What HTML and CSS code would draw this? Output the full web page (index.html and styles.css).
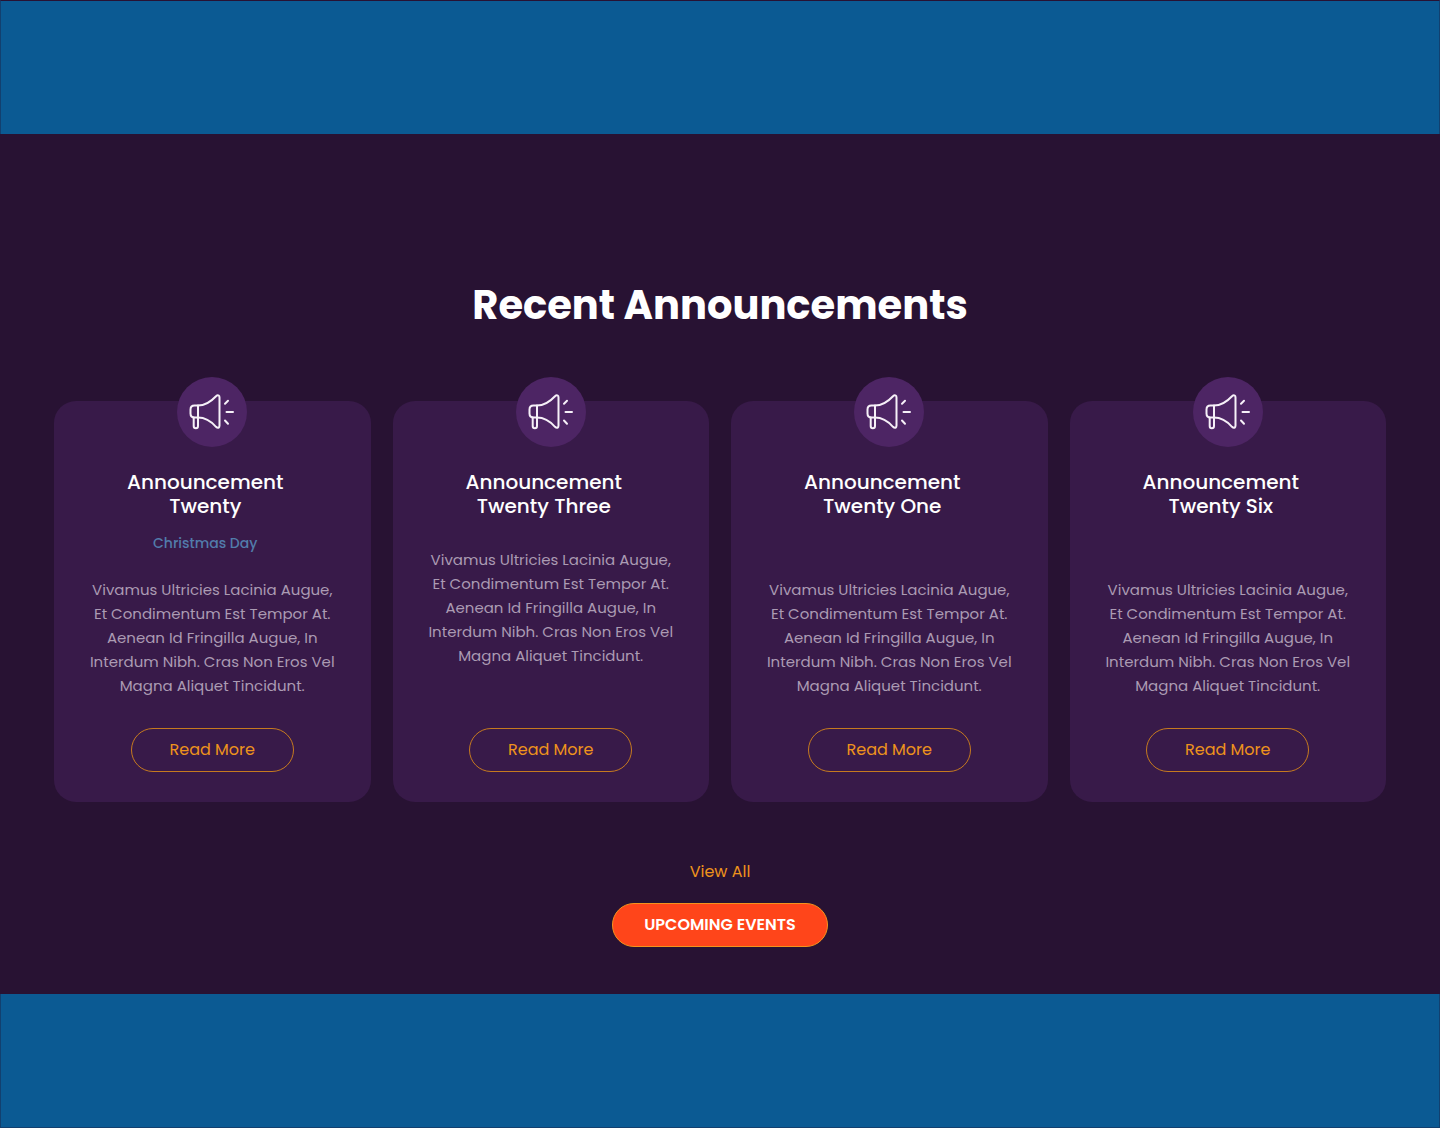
FILE: index.html
```html
<!DOCTYPE html>
<html lang="en">
<head>
<meta charset="utf-8">
<meta name="viewport" content="width=device-width, initial-scale=1">
<title>Recent Announcements</title>
<link rel="stylesheet" href="styles.css">
</head>
<body>
<svg class="sprite" aria-hidden="true">
  <symbol id="megaphone" viewBox="0 0 46 36">
    <path d="M9 11.500H5.500Q1.500 11.500 1.500 15.500V19.500Q1.500 23.500 5.500 23.500H9Z"/>
    <path d="M9 11.500C17 11.500 23 6.500 27 2.200Q28.500 .8 29.700 1.500Q30.500 2 30.500 3.500V31.500Q30.500 33 29.700 33.600Q28.500 34.300 27 32.800C23 28.300 17 23.500 9 23.500"/>
    <path d="M4.700 23.500V32Q4.700 34.300 6.900 34.300Q9 34.300 9 32V23.500"/>
    <path d="M36 9.700L39 6.700M37.500 18H44M36 26.500L39 29.700"/>
  </symbol>
</svg>
<div class="band band-top"></div>
<main class="announcements">
  <h1 class="title">Recent Announcements</h1>
  <div class="cards">
    <article class="card">
      <span class="badge"><svg class="icon" aria-hidden="true"><use href="#megaphone"/></svg></span>
      <div class="head"><h2 class="name">Announcement<br>Twenty</h2><p class="occasion">Christmas Day</p></div>
      <p class="text">Vivamus Ultricies Lacinia Augue,<br>Et Condimentum Est Tempor At.<br>Aenean Id Fringilla Augue, In<br>Interdum Nibh. Cras Non Eros Vel<br>Magna Aliquet Tincidunt.</p>
      <a class="more" href="#">Read More</a>
    </article>
    <article class="card">
      <span class="badge"><svg class="icon" aria-hidden="true"><use href="#megaphone"/></svg></span>
      <div class="head"><h2 class="name">Announcement<br>Twenty Three</h2></div>
      <p class="text">Vivamus Ultricies Lacinia Augue,<br>Et Condimentum Est Tempor At.<br>Aenean Id Fringilla Augue, In<br>Interdum Nibh. Cras Non Eros Vel<br>Magna Aliquet Tincidunt.</p>
      <a class="more" href="#">Read More</a>
    </article>
    <article class="card">
      <span class="badge"><svg class="icon" aria-hidden="true"><use href="#megaphone"/></svg></span>
      <div class="head"><h2 class="name">Announcement<br>Twenty One</h2><p class="occasion"></p></div>
      <p class="text">Vivamus Ultricies Lacinia Augue,<br>Et Condimentum Est Tempor At.<br>Aenean Id Fringilla Augue, In<br>Interdum Nibh. Cras Non Eros Vel<br>Magna Aliquet Tincidunt.</p>
      <a class="more" href="#">Read More</a>
    </article>
    <article class="card">
      <span class="badge"><svg class="icon" aria-hidden="true"><use href="#megaphone"/></svg></span>
      <div class="head"><h2 class="name">Announcement<br>Twenty Six</h2><p class="occasion"></p></div>
      <p class="text">Vivamus Ultricies Lacinia Augue,<br>Et Condimentum Est Tempor At.<br>Aenean Id Fringilla Augue, In<br>Interdum Nibh. Cras Non Eros Vel<br>Magna Aliquet Tincidunt.</p>
      <a class="more" href="#">Read More</a>
    </article>
  </div>
  <a class="view-all" href="#">View All</a>
  <button class="upcoming" type="button">UPCOMING EVENTS</button>
</main>
<div class="band band-bottom"></div>
</body>
</html>
```
FILE: styles.css
```css
* { box-sizing: border-box; }
body {
  margin: 0;
  min-height: 100vh;
  display: flex;
  flex-direction: column;
  background: #281233;
  color: #fff;
  font-family: Poppins, Inter, sans-serif;
}
h1, h2, p { margin: 0; }
a { text-decoration: none; }
.sprite { position: absolute; width: 0; height: 0; }

.band {
  height: 134px;
  background: #0b5a93;
  border: 1px solid #12406f;
}
.band-top { border-top-color: #281233; border-bottom: 0; }
.band-bottom { flex: 1 0 134px; border-top: 0; }

.announcements {
  display: flex;
  flex-direction: column;
  align-items: center;
  padding: 141px 54px 47px;
}
.title {
  font-size: 40px;
  line-height: 60px;
  font-weight: 700;
  text-align: center;
}

.cards {
  align-self: stretch;
  display: grid;
  grid-template-columns: repeat(auto-fit, minmax(280px, 1fr));
  gap: 48px 22px;
  margin-top: 66px;
}
.card {
  display: flex;
  flex-direction: column;
  align-items: center;
  padding: 0 16px 30px;
  border-radius: 22px;
  background: #381a49;
  text-align: center;
}
.badge {
  display: grid;
  place-items: center;
  width: 70px;
  height: 70px;
  margin-top: -24px;
  border-radius: 50%;
  background: #4d2564;
}
.icon {
  width: 46px;
  height: 36px;
  fill: none;
  stroke: #f6f0f8;
  stroke-width: 2;
  stroke-linecap: round;
  stroke-linejoin: round;
}
.head { margin-top: 23px; padding-right: 14px; }
.name {
  margin-bottom: 10px;
  font-size: 20px;
  line-height: 24px;
  font-weight: 500;
}
.occasion {
  height: 30px;
  font-size: 14px;
  line-height: 30px;
  font-weight: 500;
  color: #527cab;
}
.text {
  margin: 20px 0 30px;
  font-size: 15px;
  line-height: 24px;
  color: #ab9bb3;
}
.more {
  width: 163px;
  margin-top: auto;
  border: 1px solid #c67a1f;
  border-radius: 22px;
  font-size: 16px;
  line-height: 42px;
  color: #ee931c;
}
.view-all {
  margin-top: 58px;
  font-size: 16px;
  line-height: 24px;
  color: #ee931c;
}
.upcoming {
  height: 44px;
  margin-top: 19px;
  width: 216px;
  padding: 0;
  border: 1px solid #f5931c;
  border-radius: 22px;
  background: #ff451a;
  color: #fff;
  font: 600 16px/24px Poppins, Inter, sans-serif;
}
```
